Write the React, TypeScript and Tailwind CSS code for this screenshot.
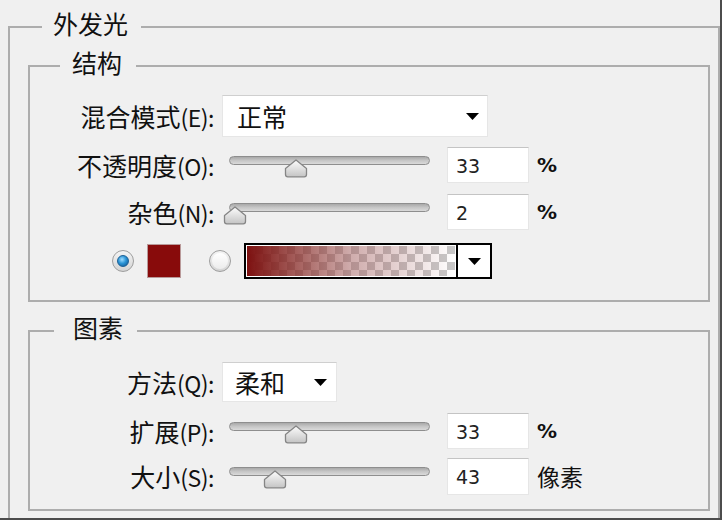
import React from "react";

const cjk = "font-['Noto_Sans_CJK_SC','Noto_Sans',sans-serif]";
const num = "font-['DejaVu_Sans',sans-serif]";

function Arrow() {
  return (
    <svg width="13" height="7" viewBox="0 0 13 7" className="shrink-0">
      <polygon points="0,0 13,0 6.5,7" fill="#000" />
    </svg>
  );
}

function Thumb() {
  return (
    <svg width="24" height="19" viewBox="0 0 24 19">
      <defs>
        <linearGradient id="thumbFill" x1="0" y1="0" x2="0" y2="1">
          <stop offset="0" stopColor="#fdfdfd" />
          <stop offset="1" stopColor="#c4c4c4" />
        </linearGradient>
      </defs>
      <path
        d="M12 1 L22.5 9.5 V15.5 Q22.5 17.8 20.2 17.8 H3.8 Q1.5 17.8 1.5 15.5 V9.5 Z"
        fill="url(#thumbFill)"
        stroke="#858585"
        strokeWidth="1.3"
        strokeLinejoin="round"
      />
    </svg>
  );
}

function Slider({ thumb }: { thumb: string }) {
  return (
    <div className="relative w-[215px] h-full shrink-0">
      <div className="mx-[7px] mt-[9px] h-[9px] rounded-full border border-[#8e8e8e] bg-gradient-to-b from-[#a9a9a9] via-[#c6c6c6] to-[#dadada]" />
      <div className={`absolute top-[12px] ${thumb}`}>
        <Thumb />
      </div>
    </div>
  );
}

function NumBox({ value }: { value: string }) {
  return (
    <div
      className={`w-[82px] h-full bg-white border border-[#e6e6e6] border-t-[#c4c4c4] flex items-center pl-[8px] pt-[2px] text-[19px] text-[#222] ${num}`}
    >
      {value}
    </div>
  );
}

function Label({ text, hint }: { text: string; hint: string }) {
  return (
    <div className="w-[184px] shrink-0 text-right leading-none whitespace-nowrap">
      {text}
      <span className="text-[23px] tracking-[-0.5px]">({hint}):</span>
    </div>
  );
}

function SliderRow(props: {
  label: string;
  hint: string;
  value: string;
  unit: string;
  thumb: string;
  height: string;
  unitCls: string;
}) {
  return (
    <div className={`flex items-center ${props.height}`}>
      <Label text={props.label} hint={props.hint} />
      <div className="ml-[8px] flex items-center h-full">
        <Slider thumb={props.thumb} />
        <div className="ml-[10px] h-full">
          <NumBox value={props.value} />
        </div>
        <div className={`ml-[8px] ${props.unitCls}`}>{props.unit}</div>
      </div>
    </div>
  );
}

function Radio({ on }: { on?: boolean }) {
  return (
    <div className="w-[22px] h-[22px] rounded-full border border-[#9e9e9e] bg-gradient-to-b from-[#f4f4f4] to-[#d4d4d4] flex items-center justify-center shrink-0">
      {on ? (
        <div className="w-[12px] h-[12px] rounded-full bg-[radial-gradient(circle_at_40%_35%,#9fdcff_0%,#2a94d6_45%,#0d4f8a_100%)] border border-[#1b5f95]" />
      ) : (
        <div className="w-[16px] h-[16px] rounded-full bg-gradient-to-b from-[#ffffff] to-[#ececec]" />
      )}
    </div>
  );
}

export default function App() {
  return (
    <div
      className={`w-[722px] h-[520px] overflow-hidden bg-[#f0f0f0] border-r-2 border-b-2 border-[#4c4c4c] text-[25px] text-[#111] ${cjk}`}
    >
      <fieldset className="ml-[8px] mt-[11px] w-[712px] border-2 border-[#adadad] p-0 m-0">
        <legend className="ml-[32px] pl-[11px] pr-[13px] leading-[24px] pb-[8px]">外发光</legend>
        <div className="pl-[18px] pr-[8px] pt-[7px] pb-[20px]">
          {/* 结构 */}
          <fieldset className="border-2 border-[#adadad] p-0 m-0">
            <legend className="ml-[30px] pl-[12px] pr-[14px] leading-[24px] pb-[8px]">结构</legend>
            <div className="pt-[13px] pb-[21px] flex flex-col">
              <div className="flex items-center h-[42px]">
                <Label text="混合模式" hint="E" />
                <div className="ml-[8px] w-[266px] h-full bg-white border border-[#e6e6e6] border-t-[#cfcfcf] flex items-center justify-between pl-[14px] pr-[8px]">
                  <span className="leading-none">正常</span>
                  <Arrow />
                </div>
              </div>
              <div className="mt-[10px]">
                <SliderRow
                  label="不透明度"
                  hint="O"
                  value="33"
                  unit="%"
                  thumb="left-[62px]"
                  height="h-[36px]"
                  unitCls={`text-[20px] font-bold ${num}`}
                />
              </div>
              <div className="mt-[11px]">
                <SliderRow
                  label="杂色"
                  hint="N"
                  value="2"
                  unit="%"
                  thumb="left-[1px]"
                  height="h-[36px]"
                  unitCls={`text-[20px] font-bold ${num}`}
                />
              </div>
              <div className="mt-[13px] h-[36px] flex items-center pl-[82px]">
                <Radio on />
                <div className="ml-[13px] w-[34px] h-[34px] bg-[#880b0b] border border-[#b99a9a]" />
                <div className="ml-[28px]">
                  <Radio />
                </div>
                <div className="ml-[13px] w-[248px] h-[36px] border-2 border-black flex">
                  <div className="flex-1 bg-[repeating-conic-gradient(#c8c8c8_0_25%,#ffffff_0_50%)] bg-[length:16px_16px] border border-white">
                    <div className="w-full h-full bg-gradient-to-r from-[#7d1010] via-[#a05a5a]/50 to-transparent" />
                  </div>
                  <div className="w-[34px] border-l-2 border-black bg-white flex items-center justify-center">
                    <Arrow />
                  </div>
                </div>
              </div>
            </div>
          </fieldset>

          {/* 图素 */}
          <fieldset className="mt-[13px] border-2 border-[#adadad] p-0 m-0">
            <legend className="ml-[24px] pl-[19px] pr-[14px] leading-[24px] pb-[8px]">图素</legend>
            <div className="pt-[15px] pb-[14px] flex flex-col">
              <div className="flex items-center h-[40px]">
                <Label text="方法" hint="Q" />
                <div className="ml-[8px] w-[115px] h-full bg-white border border-[#e6e6e6] border-t-[#cfcfcf] flex items-center justify-between pl-[12px] pr-[9px]">
                  <span className="leading-none">柔和</span>
                  <Arrow />
                </div>
              </div>
              <div className="mt-[11px]">
                <SliderRow
                  label="扩展"
                  hint="P"
                  value="33"
                  unit="%"
                  thumb="left-[62px]"
                  height="h-[36px]"
                  unitCls={`text-[20px] font-bold ${num}`}
                />
              </div>
              <div className="mt-[9px]">
                <SliderRow
                  label="大小"
                  hint="S"
                  value="43"
                  unit="像素"
                  thumb="left-[41px]"
                  height="h-[37px]"
                  unitCls="text-[23px]"
                />
              </div>
            </div>
          </fieldset>
        </div>
      </fieldset>
    </div>
  );
}
